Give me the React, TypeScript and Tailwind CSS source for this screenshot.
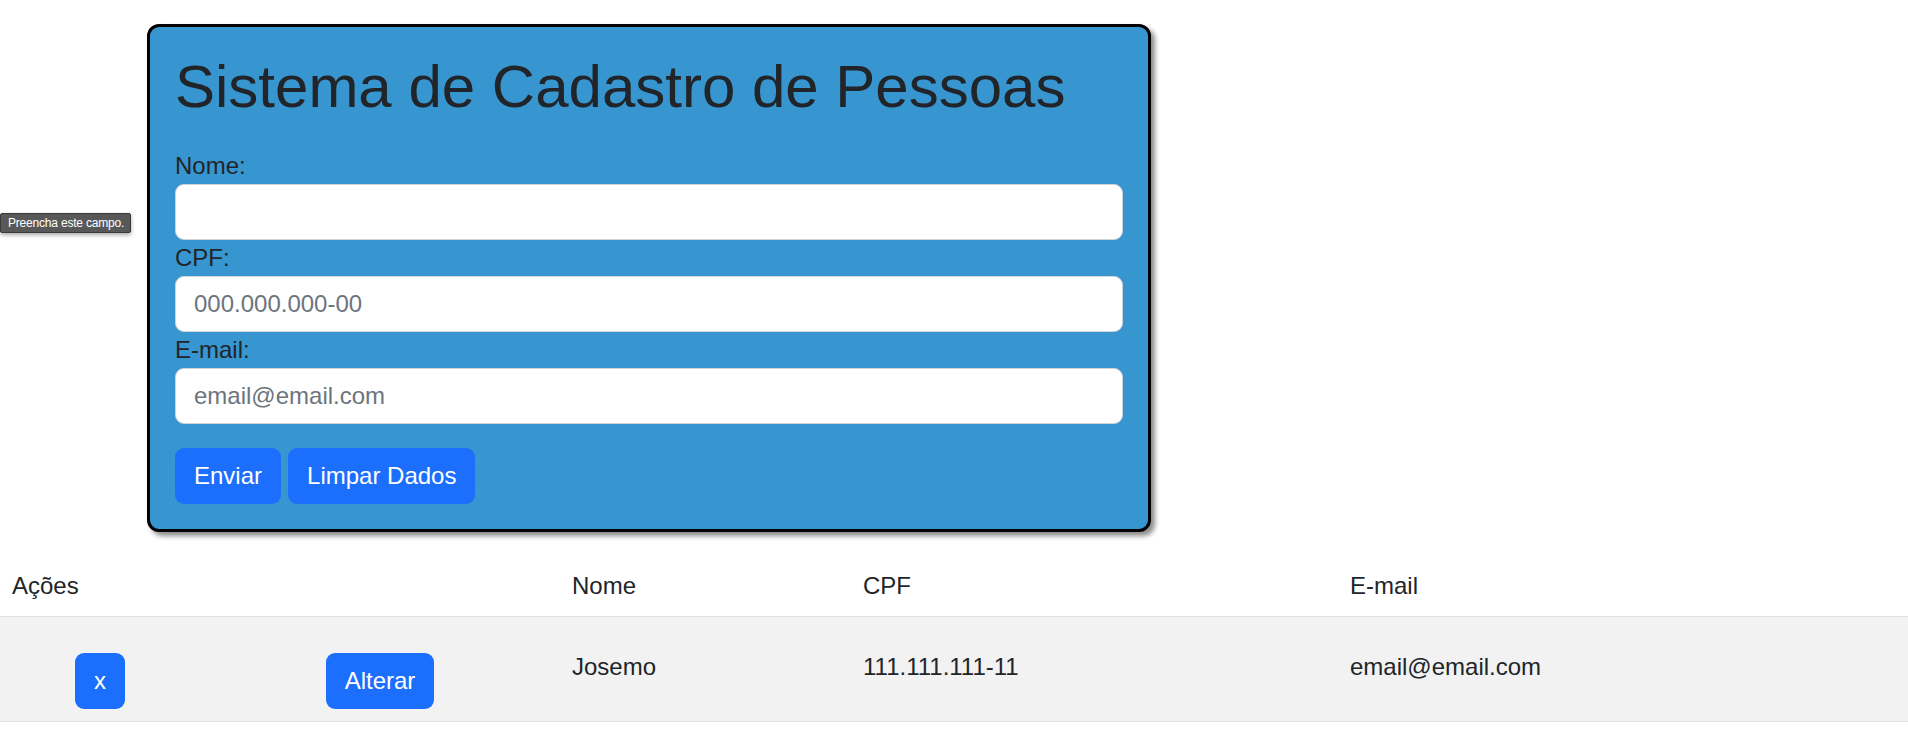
import React from "react";

export default function App() {
  return (
    <div className="relative min-h-[731px] w-[1908px] bg-white font-['Liberation_Sans',Arial,sans-serif] text-[#212529]">
      {/* browser validation tooltip */}
      <div className="absolute left-0 top-[213px] flex h-[20px] w-[131px] items-center rounded-[2px] border border-[#3a3a3a] bg-[#585858] pl-[7px] text-[12px] tracking-[-0.2px] leading-none text-white shadow-[0_2px_4px_rgba(0,0,0,0.35)]">
        Preencha este campo.
      </div>

      <div className="pt-[24px] pl-[147px]">
        <div className="w-[1004px] rounded-[12px] border-[3px] border-black bg-[#3795cf] px-[25px] pt-[24px] pb-[25px] shadow-[4px_4px_5px_rgba(0,0,0,0.45)]">
          <h1 className="mb-[25px] h-[72px] text-[60px] leading-[72px] font-normal">
            Sistema de Cadastro de Pessoas
          </h1>
          <form className="flex flex-col">
            <label className="h-[36px] text-[24px] leading-[36px]">Nome:</label>
            <input
              type="text"
              className="h-[56px] w-full rounded-[9px] border border-[#ced4da] bg-white px-[18px] text-[24px] outline-none placeholder:text-[#6c757d]"
            />
            <label className="h-[36px] text-[24px] leading-[36px]">CPF:</label>
            <input
              type="text"
              placeholder="000.000.000-00"
              className="h-[56px] w-full rounded-[9px] border border-[#ced4da] bg-white px-[18px] text-[24px] outline-none placeholder:text-[#6c757d]"
            />
            <label className="h-[36px] text-[24px] leading-[36px]">E-mail:</label>
            <input
              type="text"
              placeholder="email@email.com"
              className="h-[56px] w-full rounded-[9px] border border-[#ced4da] bg-white px-[18px] text-[24px] outline-none placeholder:text-[#6c757d]"
            />
            <div className="mt-[24px] flex gap-[7px]">
              <button type="button" className="h-[56px] rounded-[9px] bg-[#1c6efd] px-[19px] text-[24px] text-white">
                Enviar
              </button>
              <button type="button" className="h-[56px] rounded-[9px] bg-[#1c6efd] px-[19px] text-[24px] text-white">
                Limpar Dados
              </button>
            </div>
          </form>
        </div>
      </div>

      <div className="mt-[24px] w-full text-[24px] leading-[36px]">
        <div className="grid h-[61px] grid-cols-[560px_291px_487px_1fr] border-b border-[#dee2e6]">
          <div className="pl-[12px] pt-[12px]">Ações</div>
          <div className="pl-[12px] pt-[12px]">Nome</div>
          <div className="pl-[12px] pt-[12px]">CPF</div>
          <div className="pl-[12px] pt-[12px]">E-mail</div>
        </div>
        <div className="grid h-[105px] grid-cols-[200px_360px_291px_487px_1fr] border-b border-[#dee2e6] bg-[#f2f2f2]">
          <div className="flex justify-center pt-[36px]">
            <button type="button" className="h-[56px] w-[50px] rounded-[9px] bg-[#1c6efd] text-[24px] text-white">
              x
            </button>
          </div>
          <div className="flex justify-center pt-[36px]">
            <button type="button" className="h-[56px] rounded-[9px] bg-[#1c6efd] px-[18.5px] text-[24px] text-white">
              Alterar
            </button>
          </div>
          <div className="pl-[12px] pt-[32px]">Josemo</div>
          <div className="pl-[12px] pt-[32px]">111.111.111-11</div>
          <div className="pl-[12px] pt-[32px]">email@email.com</div>
        </div>
      </div>
    </div>
  );
}
